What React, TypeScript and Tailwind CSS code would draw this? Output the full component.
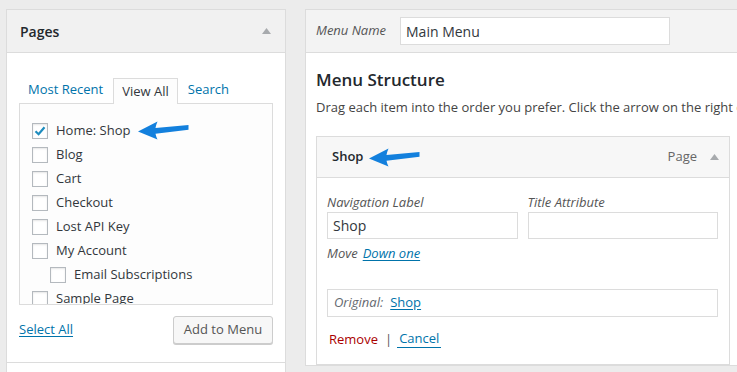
import React from "react";

const Arrow = ({ className }: { className: string }) => (
  <svg className={className} width="51" height="20" viewBox="0 0 51 20">
    <path d="M0 11.5 L19.5 1.5 Q18 5 17.5 8 L50.5 5 L50.5 9.8 L17.5 13.8 Q18 16.5 19.5 19.5 Z" fill="#1380dd" />
  </svg>
);

const Tri = () => (
  <svg width="9" height="6" viewBox="0 0 9 6">
    <path d="M0 6 L4.5 0 L9 6 Z" fill="#a7aaad" />
  </svg>
);

const Check = ({ checked }: { checked?: boolean }) => (
  <span className="w-[16px] h-[16px] shrink-0 border border-[#b4b9be] bg-white shadow-[inset_0_1px_2px_rgba(0,0,0,0.1)] flex items-center justify-center">
    {checked && (
      <svg width="14" height="14" viewBox="0 0 14 14">
        <path d="M2.5 7.2 L5.6 10.2 L11.5 3.2" stroke="#1e8cbe" strokeWidth="2.2" fill="none" />
      </svg>
    )}
  </span>
);

const items: { label: string; checked?: boolean; indent?: boolean }[] = [
  { label: "Home: Shop", checked: true },
  { label: "Blog" },
  { label: "Cart" },
  { label: "Checkout" },
  { label: "Lost API Key" },
  { label: "My Account" },
  { label: "Email Subscriptions", indent: true },
  { label: "Sample Page" },
];

export default function App() {
  return (
    <div className="w-[737px] h-[372px] overflow-hidden bg-[#ececec] flex items-start pt-[9px] pl-[6px] font-['Open_Sans',sans-serif] text-[13px] text-[#32373c]">
      {/* Left panel */}
      <div className="w-[280px] shrink-0 border border-[#dcdcdc] bg-white flex flex-col">
        <div className="h-[43px] bg-[#f1f1f1] border-b border-[#dcdcdc] flex items-center justify-between pl-[13px] pr-[14px]">
          <span className="text-[14px] font-semibold text-[#23282d]">Pages</span>
          <Tri />
        </div>
        <div className="pt-[24px] pl-[12px] pr-[12px] flex flex-col">
          <div className="flex items-end gap-[2px] pl-[1px] h-[26px]">
            <span className="h-[26px] px-[8px] flex items-center text-[#0073aa]">Most Recent</span>
            <span className="h-[26px] px-[8px] flex items-center text-[#32373c] border border-b-0 border-[#dcdcdc] bg-[#fdfdfd] relative z-10 -mb-px">View All</span>
            <span className="h-[26px] px-[8px] flex items-center text-[#0073aa]">Search</span>
          </div>
          <div className="h-[202px] border border-[#dcdcdc] bg-[#fdfdfd] overflow-hidden pt-[15px] pl-[12px]">
            {items.map((it) => (
              <div key={it.label} className={`relative h-[24px] flex items-center gap-[8px] ${it.indent ? "pl-[18px]" : ""}`}>
                <Check checked={it.checked} />
                <span className="text-[#32373c]">{it.label}</span>
                {it.checked && <Arrow className="absolute left-[106px] top-[1px]" />}
              </div>
            ))}
          </div>
          <div className="mt-[11px] h-[28px] flex items-center justify-between">
            <span className="text-[#0073aa] underline underline-offset-2">Select All</span>
            <span className="h-[28px] w-[100px] flex items-center justify-center rounded-[3px] border border-[#cccccc] bg-[#f7f7f7] shadow-[0_1px_0_#cccccc] text-[#555]">Add to Menu</span>
          </div>
          <div className="h-[18px]" />
        </div>
        <div className="border-t border-[#dcdcdc] h-[30px] bg-white" />
      </div>

      {/* Right panel */}
      <div className="ml-[19px] w-[440px] shrink-0 border border-[#dcdcdc] bg-white flex flex-col">
        <div className="h-[43px] bg-[#f3f3f3] border-b border-[#dcdcdc] flex items-center pl-[10px]">
          <span className="italic text-[#555]">Menu Name</span>
          <div className="ml-[14px] w-[270px] h-[28px] border border-[#dcdcdc] bg-white flex items-center pl-[5px] text-[14px] text-[#32373c]">
            Main Menu
          </div>
        </div>
        <div className="pl-[10px] pt-[16px] flex flex-col">
          <div className="text-[17px] leading-[22px] font-semibold text-[#23282d]">Menu Structure</div>
          <div className="mt-[7px] leading-[18px] text-[#444] whitespace-nowrap">
            Drag each item into the order you prefer. Click the arrow on the right of the item to reveal additional configuration options.
          </div>
          <div className="mt-[20px] w-[414px] border border-[#dcdcdc] bg-white flex flex-col">
            <div className="relative h-[41px] bg-[#f7f7f7] border-b border-[#dcdcdc] flex items-center justify-between pl-[15px] pr-[10px]">
              <span className="font-semibold text-[#23282d]">Shop</span>
              <Arrow className="absolute left-[52px] top-[10px]" />
              <div className="flex items-center gap-[13px]">
                <span className="text-[#666]">Page</span>
                <Tri />
              </div>
            </div>
            <div className="pl-[10px] pr-[11px] pt-[15px] pb-[16px] flex flex-col">
              <div className="flex gap-[10px]">
                <div className="w-[191px] flex flex-col">
                  <span className="italic text-[#555] leading-[18px]">Navigation Label</span>
                  <div className="mt-[1px] h-[27px] border border-[#dcdcdc] bg-white flex items-center pl-[5px] text-[14px] text-[#32373c]">Shop</div>
                </div>
                <div className="w-[191px] flex flex-col">
                  <span className="italic text-[#555] leading-[18px]">Title Attribute</span>
                  <div className="mt-[1px] h-[27px] border border-[#dcdcdc] bg-white" />
                </div>
              </div>
              <div className="mt-[5px] leading-[18px] flex gap-[5px]">
                <span className="italic text-[#555]">Move</span>
                <span className="italic text-[#0073aa] underline underline-offset-2">Down one</span>
              </div>
              <div className="mt-[27px] w-[391px] h-[28px] border border-[#dcdcdc] bg-white flex items-center pl-[6px] gap-[7px]">
                <span className="italic text-[#646970]">Original:</span>
                <span className="text-[#0073aa] underline underline-offset-2">Shop</span>
              </div>
              <div className="mt-[12px] leading-[18px] flex items-center pl-[2px]">
                <span className="text-[#a00]">Remove</span>
                <span className="mx-[7px] text-[#555]">|</span>
                <span className="text-[#0073aa] border-b border-[#0073aa] px-[2px] -ml-[2px]">Cancel</span>
              </div>
            </div>
          </div>
        </div>
      </div>
    </div>
  );
}
